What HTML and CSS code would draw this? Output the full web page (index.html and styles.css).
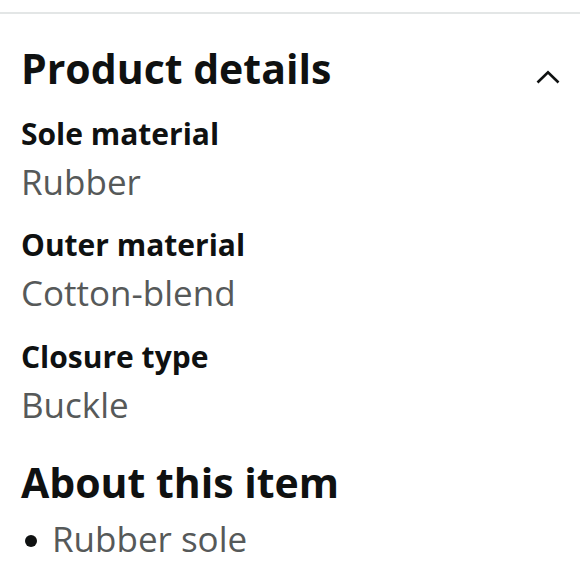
FILE: index.html
```html
<!DOCTYPE html>
<html lang="en">
<head>
<meta charset="utf-8">
<title>Product details</title>
<link rel="stylesheet" href="styles.css">
</head>
<body>
<div class="divider"></div>
<section class="details">
  <div class="section-head">
    <h2 class="title">Product details</h2>
    <svg class="chevron" width="24" height="14" viewBox="0 0 24 14" aria-hidden="true">
      <polyline points="1.5,12.5 12,2.2 22.5,12.5" fill="none" stroke="#0f1111" stroke-width="2.6"/>
    </svg>
  </div>
  <dl class="attrs">
    <div class="attr">
      <dt class="label">Sole material</dt>
      <dd class="value">Rubber</dd>
    </div>
    <div class="attr">
      <dt class="label">Outer material</dt>
      <dd class="value">Cotton-blend</dd>
    </div>
    <div class="attr">
      <dt class="label">Closure type</dt>
      <dd class="value">Buckle</dd>
    </div>
  </dl>
  <h2 class="title about">About this item</h2>
  <ul class="bullets">
    <li class="bullet"><span class="dot"></span><span class="value">Rubber sole</span></li>
  </ul>
</section>
</body>
</html>
```

FILE: styles.css
```css
* { box-sizing: border-box; }
html, body { margin: 0; padding: 0; background: #fff; }
body {
  font-family: "Open Sans", "Noto Sans", sans-serif;
  color: #0f1111;
  width: 580px;
  height: 580px;
  overflow: hidden;
}
.divider {
  margin-top: 12px;
  height: 2px;
  background: #e3e6e6;
}
.details {
  padding: 30px 20px 0 21px;
  display: flex;
  flex-direction: column;
}
.section-head {
  display: flex;
  align-items: center;
  justify-content: space-between;
}
.title {
  margin: 0;
  font-size: 41px;
  line-height: 48px;
  font-weight: 700;
}
.chevron { margin-top: 18px; flex-shrink: 0; }
.attrs {
  margin: 23.5px 0 0;
  display: flex;
  flex-direction: column;
  gap: 25.5px;
}
.attr { display: flex; flex-direction: column; gap: 10px; }
.label {
  font-size: 30px;
  line-height: 36px;
  font-weight: 700;
}
.value {
  margin: 0;
  font-size: 35px;
  line-height: 40px;
  color: #565959;
}
.about { margin-top: 33.5px; }
.bullets { list-style: none; margin: 12.5px 0 0; padding: 0; }
.bullet { display: flex; align-items: center; gap: 15px; }
.dot {
  width: 12px; height: 12px; border-radius: 50%;
  background: #0f1111;
  margin-left: 4px;
  margin-top: 5px;
  flex-shrink: 0;
}
```
